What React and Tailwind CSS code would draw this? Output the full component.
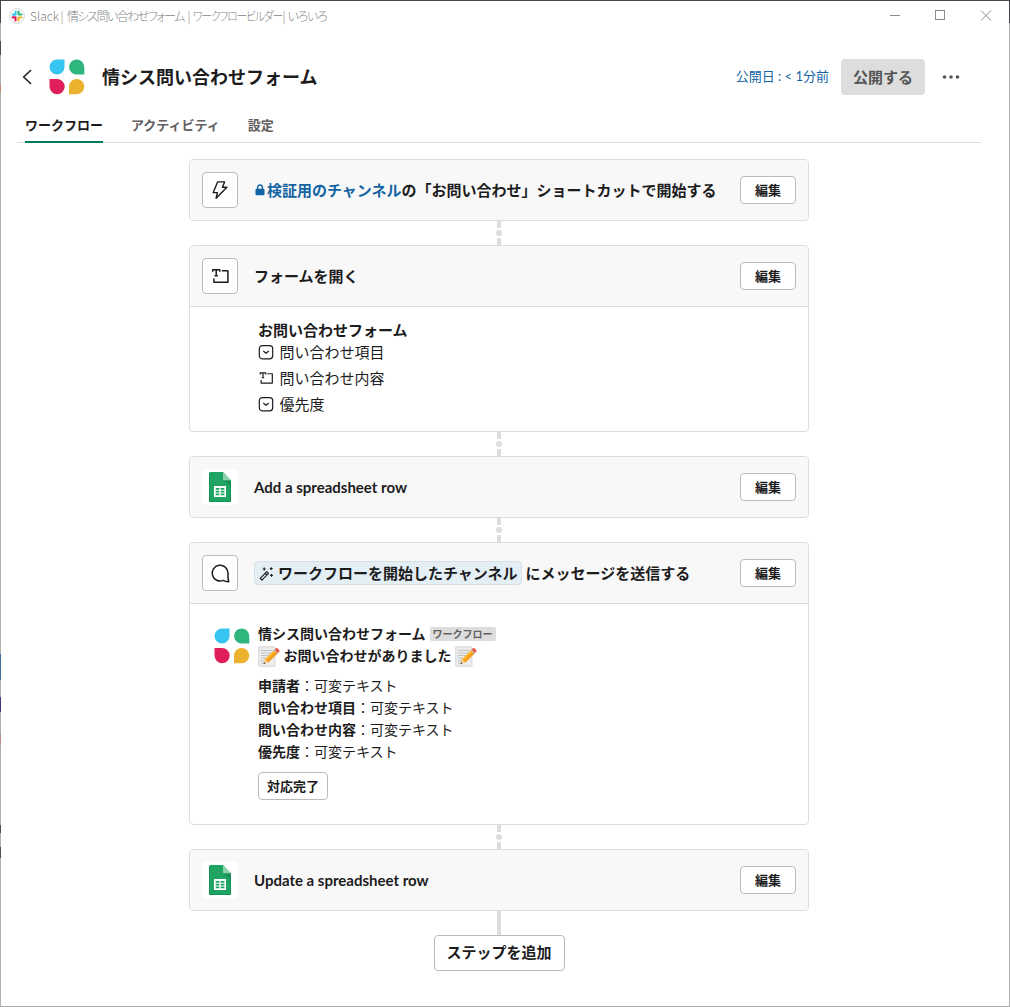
import { Fragment } from 'react';

const baseFont = "font-['Lato','Noto_Sans_CJK_JP',sans-serif]";

function SlackMark() {
  return (
    <svg width="16" height="16" viewBox="0 0 16 16">
      <circle cx="8" cy="8" r="7.4" fill="#fff" stroke="#d0d0d0" strokeWidth="0.9" />
      <g strokeWidth="2.1" strokeLinecap="round">
        <path d="M6.6 3.6v3M3.7 6.6h2" stroke="#36c5f0" />
        <path d="M9.5 6.5h3M9.5 3.5v2" stroke="#2eb67d" />
        <path d="M9.4 9.5v3M10.5 9.5h2" stroke="#ecb22e" />
        <path d="M3.6 9.4h3M6.5 10.5v2" stroke="#e01e5a" />
      </g>
    </svg>
  );
}

function AppLogo() {
  return (
    <svg width="36" height="36" viewBox="0 0 36 36">
      <path d="M8 .5H15.5V8A7.5 7.5 0 1 1 8 .5Z" fill="#36c5f0" />
      <path d="M35.3 15.6H27.6A7.6 7.6 0 1 1 35.3 8Z" fill="#2eb67d" />
      <path d="M.5 20H8A7.6 7.6 0 1 1 .5 27.6Z" fill="#e01e5a" />
      <path d="M20 35.3V27.6A7.6 7.6 0 1 1 27.6 35.3Z" fill="#ecb22e" />
    </svg>
  );
}

function BoltIcon() {
  return (
    <svg width="20" height="20" viewBox="0 0 20 20" fill="none" stroke="#1d1c1d" strokeWidth="1.4" strokeLinejoin="round">
      <path d="M7.6 1.9h7l-2.2 5.3h4.5L6.1 18.2l1.3-5.6H3.2Z" />
    </svg>
  );
}

function TextInputIcon({ size = 20 }) {
  return (
    <svg width={size} height={size} viewBox="0 0 20 20" fill="none" stroke="#1d1c1d" strokeWidth="1.5" strokeLinejoin="round">
      <path d="M2.7 5.7V3.7h7v2M6.2 3.7v6M4.6 9.7h3.2" />
      <path d="M11.7 4.7h6.2v11.6H3.9v-3.9" />
    </svg>
  );
}

function SelectIcon() {
  return (
    <svg width="16" height="16" viewBox="0 0 16 16" fill="none" stroke="#1d1c1d" strokeWidth="1.2" strokeLinecap="round" strokeLinejoin="round">
      <rect x="1.3" y="1.6" width="13.4" height="13.2" rx="3" />
      <path d="m5.6 7.3 2.4 2 2.4-2" />
    </svg>
  );
}

function MessageIcon() {
  return (
    <svg width="20" height="20" viewBox="0 0 20 20" fill="none" stroke="#1d1c1d" strokeWidth="1.5" strokeLinejoin="round">
      <path d="M13.2 17.4A7.9 7.9 0 1 1 18 10v4.3q0 2.5.8 4.4-3 .2-5.600-1.300Z" />
    </svg>
  );
}

function SheetsIcon() {
  return (
    <svg width="22" height="30" viewBox="0 0 22 30">
      <path d="M1.5 0H14l8 8.5V28.5a1.5 1.5 0 0 1-1.5 1.5h-19A1.5 1.5 0 0 1 0 28.5v-27A1.5 1.5 0 0 1 1.5 0Z" fill="#1fa463" />
      <path d="M.5 1v28.5h21V10" fill="none" stroke="#139255" />
      <path d="M14 0v7a1.5 1.5 0 0 0 1.5 1.5H22Z" fill="#8ed1b1" />
      <path d="M15 8.5h7V15Z" fill="#188f54" />
      <rect x="5" y="14" width="12" height="11" fill="#fff" />
      <path d="M6.7 15.9h3.7v1.8H6.7zM11.7 15.9h3.7v1.8h-3.7zM6.7 18.7h3.7v1.7H6.7zM11.7 18.7h3.7v1.7h-3.7zM6.7 21.5h3.7v1.7H6.7zM11.7 21.5h3.7v1.7h-3.7z" fill="#1fa463" />
    </svg>
  );
}

function LockIcon() {
  return (
    <svg width="10" height="12" viewBox="0 0 10 12">
      <path d="M2.6 5V3.4a2.4 2.4 0 0 1 4.8 0V5" fill="none" stroke="#1264a3" strokeWidth="1.4" />
      <rect x=".5" y="4.7" width="9" height="6.5" rx="1" fill="#1264a3" />
    </svg>
  );
}

function WandIcon() {
  return (
    <svg width="15" height="15" viewBox="0 0 15 15" fill="none" stroke="#1d1c1d" strokeWidth="1.1" strokeLinejoin="round">
      <path d="m1.2 12.4 6.6-6.8 1.700 1.700-6.600 6.800ZM6.200 7.300l1.700 1.700" />
      <path d="M5.2 1.600v2.800M3.800 3h2.800M12.200 1.200v2.800M10.800 2.600h2.800M12.500 8v2.800M11.100 9.400h2.800" />
    </svg>
  );
}

function MemoIcon() {
  return (
    <svg width="22" height="22" viewBox="0 0 22 22">
      <g transform="translate(0 .5)">
        <rect x=".7" y="1.3" width="16.3" height="19.5" rx=".8" fill="#ececec" stroke="#cfcfcf" strokeWidth=".8" />
        <path d="M3 5h11.5M3 7.5h11.5M3 10h11M3 12.5h8M3 15h4M3 17.5h3" stroke="#bcc0c3" strokeWidth=".9" />
      </g>
      <g transform="translate(-.3 1.6)">
        <path d="m5.8 17.4 1.4-4.7L16.9 3l3.4 3.3-9.8 9.7Z" fill="#fdb52b" />
        <path d="m8.9 14.5 9.7-9.8 1.7 1.6-9.8 9.7Z" fill="#f59a1c" />
        <path d="m5.8 17.4 1.4-4.7 3.3 3.3Z" fill="#f5d3a5" />
        <path d="m5.8 17.4.6-1.9 1.3 1.3Z" fill="#333" />
        <path d="m16 3.9.9-.9 3.4 3.3-1 .9Z" fill="#b5bcc2" />
        <path d="m16.9 3 1.4-1.4q.8-.6 1.6.1l1.600 1.600q.7.8.1 1.5l-1.3 1.500Z" fill="#e8594b" />
      </g>
    </svg>
  );
}

// Slices of whatever sits behind the window and shows through its left edge
function LeftEdge() {
  return (
    <div className="flex w-px shrink-0 flex-col bg-[#b0b0b0]">
      <div className="h-[22px] bg-[#46454b]" />
      <div className="mt-[18px] h-[14px] bg-[#4c4c4e]" />
      <div className="mt-[30px] h-[8px] bg-[#c08a78]" />
      <div className="mt-[561px] h-[26px] bg-[#3f6d9b]" />
      <div className="mt-[17px] h-[15px] bg-[#3d3a83]" />
      <div className="mt-[22px] h-[11px] bg-[#b98f8e]" />
      <div className="mt-[80px] h-[8px] bg-[#505050]" />
      <div className="mt-[14px] h-[11px] bg-[#505050]" />
    </div>
  );
}

function TitleBar() {
  return (
    <div className="flex h-[29px] items-center pl-2 text-[12px] text-[#858585]">
      <SlackMark />
      <div className="ml-[5px] flex flex-1 font-['Noto_Sans_CJK_JP',sans-serif] font-light whitespace-pre [font-feature-settings:'palt']">
        <span className="w-[30.5px]">Slack</span>
        <span className="w-[6.5px]">|</span>
        <span className="w-[120.5px] tracking-[-1.5px]">情シス問い合わせフォーム</span>
        <span className="w-[5.5px]">|</span>
        <span className="w-[89.5px]">
          <span className="inline-block origin-left scale-x-[0.9] tracking-[-1.3px]">ワークフロービルダー</span>
        </span>
        <span className="w-[5px]">|</span>
        <span className="tracking-[-1.2px]">いろいろ</span>
      </div>
      <svg width="102" height="11" viewBox="0 0 102 11" fill="none" stroke="#8a8a8a" className="mr-[17px]">
        <path d="M0 5.5h10M91 .5l10 10M101 .5l-10 10" />
        <rect x="45.5" y=".5" width="9" height="9" />
      </svg>
    </div>
  );
}

function Header() {
  return (
    <header className="flex h-[36px] items-center pl-5">
      <svg width="12" height="16" viewBox="0 0 12 16" fill="none" stroke="#1d1c1d" strokeWidth="1.5" strokeLinecap="round" strokeLinejoin="round">
        <path d="M9.6 1.5 2.6 8l7 6.5" />
      </svg>
      <div className="ml-4">
        <AppLogo />
      </div>
      <h1 className="ml-[17px] flex-1 text-[18px] font-bold">情シス問い合わせフォーム</h1>
      <span className="text-[13px] text-[#1264a3]">公開日 : &lt; 1分前</span>
      <button className="ml-3 h-9 w-[84px] rounded-[4px] bg-[#dddddd] text-[15px] font-bold text-[#565556]">公開する</button>
      <svg width="18" height="4" viewBox="0 0 18 4" fill="#565556" className="ml-[17px] mr-[49px]">
        <circle cx="2.5" cy="2" r="1.8" />
        <circle cx="9" cy="2" r="1.8" />
        <circle cx="15.5" cy="2" r="1.8" />
      </svg>
    </header>
  );
}

function Tabs() {
  return (
    <nav className="mt-[13px] ml-4 mr-[28px] flex h-[35px] gap-7 border-b border-[#dddddd] pl-2 text-[13px] leading-[34px] font-bold text-[#616061]">
      <a className="-mb-px border-b-2 border-[#007a5a] text-[#1d1c1d]">ワークフロー</a>
      <a>アクティビティ</a>
      <a>設定</a>
    </nav>
  );
}

function Connector({ solid }) {
  if (solid) return <div className="mx-auto h-6 w-1 bg-[#dddddd]" />;
  return (
    <div className="flex h-6 flex-col items-center justify-between">
      <div className="h-[7px] w-1 bg-[#dddddd]" />
      <div className="size-[6px] rounded-full bg-[#dddddd]" />
      <div className="h-[7px] w-1 bg-[#dddddd]" />
    </div>
  );
}

function StepCard({ icon, plain, title, children }) {
  return (
    <section className="overflow-hidden rounded-[4px] border border-[#dddddd] bg-white">
      <div className="flex h-[60px] items-center bg-[#f8f8f8] px-3">
        <div className={plain
          ? 'flex size-9 items-center justify-center rounded-[4px] bg-white'
          : 'flex size-9 items-center justify-center rounded-[4px] border border-[#bbbbbb] bg-white'}
        >
          {icon}
        </div>
        <h2 className="ml-4 flex flex-1 items-center text-[15px] font-bold whitespace-nowrap">{title}</h2>
        <button className="h-7 w-14 rounded-[4px] border border-[#bbbbbb] bg-white pt-px text-[13px] font-bold">編集</button>
      </div>
      {children && <div className="border-t border-[#dddddd]">{children}</div>}
    </section>
  );
}

const fields = [
  { label: '問い合わせ項目', icon: <SelectIcon /> },
  { label: '問い合わせ内容', icon: <TextInputIcon size={16} /> },
  { label: '優先度', icon: <SelectIcon /> },
];

const messageLines = ['申請者', '問い合わせ項目', '問い合わせ内容', '優先度'];

const steps = [
  {
    icon: <BoltIcon />,
    title: (
      <>
        <span className="mr-[2px] ml-px"><LockIcon /></span>
        <span className="text-[#1264a3]">検証用のチャンネル</span>の「お問い合わせ」ショートカットで開始する
      </>
    ),
  },
  {
    icon: <TextInputIcon />,
    title: 'フォームを開く',
    body: (
      <div className="h-[124px] pt-3 pl-[68px] text-[15px]">
        <p className="leading-[22px] font-bold">お問い合わせフォーム</p>
        {fields.map((field) => (
          <div key={field.label} className="mb-1 flex h-[22px] items-center gap-[5.5px]">
            {field.icon}
            <span>{field.label}</span>
          </div>
        ))}
      </div>
    ),
  },
  {
    icon: <SheetsIcon />,
    plain: true,
    title: 'Add a spreadsheet row',
  },
  {
    icon: <MessageIcon />,
    title: (
      <>
        <span className="mr-1 flex h-6 items-center gap-1 rounded-[4px] border border-[#d5dfe4] bg-[#e3eff5] pr-[3px] pl-1">
          <WandIcon />
          ワークフローを開始したチャンネル
        </span>
        にメッセージを送信する
      </>
    ),
    body: (
      <div className="flex h-[220px] gap-2 pt-[19px] pl-6">
        <div className="pt-[5px]">
          <AppLogo />
        </div>
        <div className="text-[14px] leading-[22px]">
          <div className="flex items-center gap-1 font-bold">
            情シス問い合わせフォーム
            <span className="h-[14px] rounded-[2px] bg-[#dddddd] px-[3px] text-[10px] leading-[14px] text-[#616061]">ワークフロー</span>
          </div>
          <div className="flex items-center gap-[3.5px] font-bold">
            <MemoIcon />
            お問い合わせがありました
            <MemoIcon />
          </div>
          <div className="mt-2">
            {messageLines.map((label) => (
              <p key={label}><b>{label}</b>：可変テキスト</p>
            ))}
          </div>
          <button className="mt-[9px] flex h-7 w-[70px] items-center justify-center rounded-[4px] border border-[#bbbbbb] text-[13px] font-bold">対応完了</button>
        </div>
      </div>
    ),
  },
  {
    icon: <SheetsIcon />,
    plain: true,
    title: 'Update a spreadsheet row',
  },
];

export default function App() {
  return (
    <div lang="ja" className={`flex h-[1007px] w-[1010px] overflow-hidden border-t border-b border-t-[#46454b] border-b-[#a8a8a8] bg-white text-[#1d1c1d] ${baseFont}`}>
      <LeftEdge />
      <div className="flex-1">
        <TitleBar />
        <div className="mt-[29px]">
          <Header />
        </div>
        <Tabs />
        <main className="mt-4 ml-[188px] w-[620px]">
          {steps.map((step, index) => (
            <Fragment key={index}>
              <StepCard icon={step.icon} plain={step.plain} title={step.title}>{step.body}</StepCard>
              <Connector solid={index === steps.length - 1} />
            </Fragment>
          ))}
          <button className="mx-auto block h-9 w-[131px] rounded-[4px] border border-[#bbbbbb] pb-[2px] text-[15px] font-bold">ステップを追加</button>
        </main>
      </div>
      <div className="w-px shrink-0 bg-[#b0b0b0]">
        <div className="h-[22px] bg-[#46454b]" />
      </div>
    </div>
  );
}
